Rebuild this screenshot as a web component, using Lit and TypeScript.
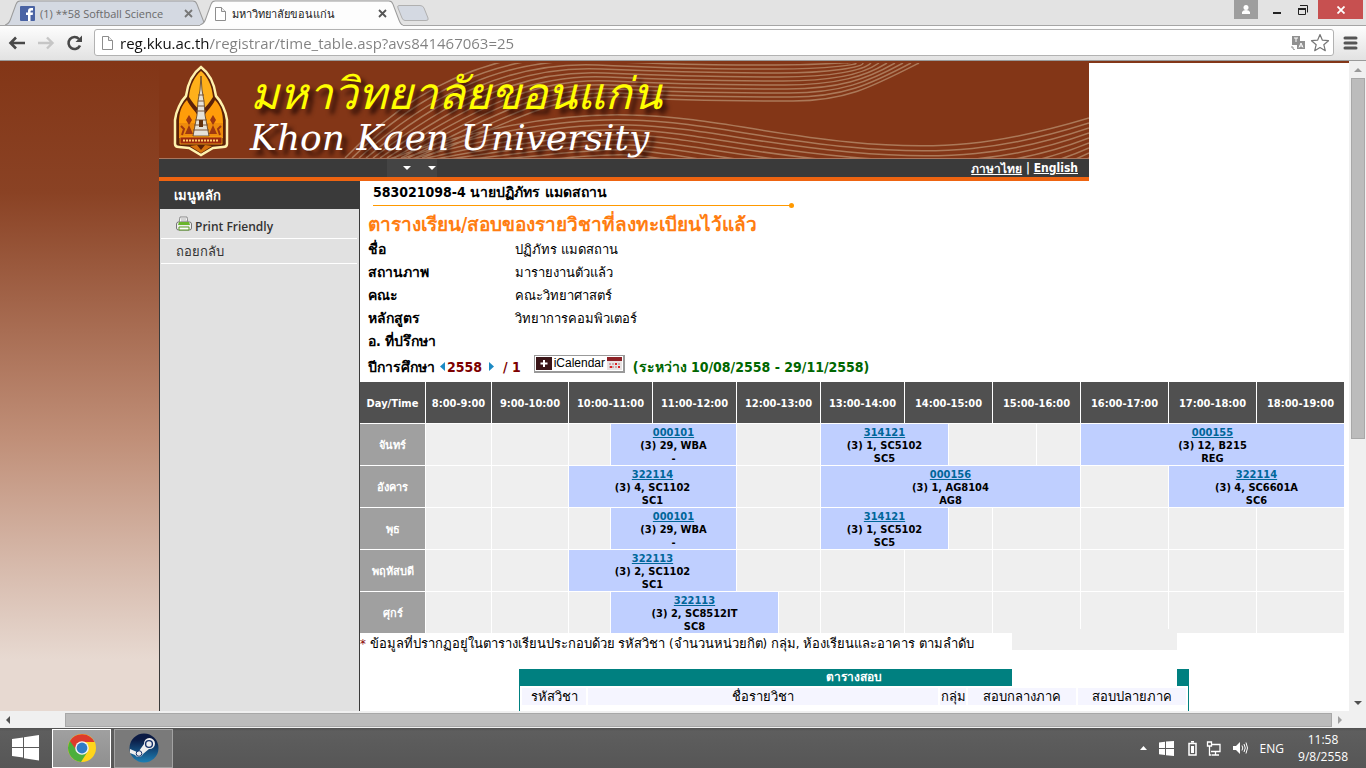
import { LitElement, html, svg, css } from "lit";
import { customElement } from "lit/decorators.js";

interface Slot {
  span: number;
  code?: string;
  detail?: string;
  room?: string;
}

const columnWidths = [66, 66, 77, 42, 42, 84, 42, 42, 84, 44, 44, 44, 44, 88, 88, 88];

const hours: [string, number][] = [
  ["8:00-9:00", 1],
  ["9:00-10:00", 1],
  ["10:00-11:00", 2],
  ["11:00-12:00", 1],
  ["12:00-13:00", 2],
  ["13:00-14:00", 1],
  ["14:00-15:00", 2],
  ["15:00-16:00", 2],
  ["16:00-17:00", 1],
  ["17:00-18:00", 1],
  ["18:00-19:00", 1],
];

const free = (span = 1): Slot => ({ span });
const busy = (span: number, code: string, detail: string, room: string): Slot => ({ span, code, detail, room });

const week: { day: string; slots: Slot[] }[] = [
  {
    day: "จันทร์",
    slots: [free(), free(), free(), busy(2, "000101", "(3) 29, WBA", "-"), free(2), busy(2, "314121", "(3) 1, SC5102", "SC5"), free(2), free(), busy(3, "000155", "(3) 12, B215", "REG")],
  },
  {
    day: "อังคาร",
    slots: [free(), free(), busy(3, "322114", "(3) 4, SC1102", "SC1"), free(2), busy(5, "000156", "(3) 1, AG8104", "AG8"), free(), busy(2, "322114", "(3) 4, SC6601A", "SC6")],
  },
  {
    day: "พุธ",
    slots: [free(), free(), free(), busy(2, "000101", "(3) 29, WBA", "-"), free(2), busy(2, "314121", "(3) 1, SC5102", "SC5"), free(), free(2), free(), free(), free()],
  },
  {
    day: "พฤหัสบดี",
    slots: [free(), free(), busy(3, "322113", "(3) 2, SC1102", "SC1"), free(2), free(), free(2), free(2), free(), free(), free()],
  },
  {
    day: "ศุกร์",
    slots: [free(), free(), free(), busy(3, "322113", "(3) 2, SC8512IT", "SC8"), free(), free(), free(2), free(2), free(), free(), free()],
  },
];

const profile: [string, string][] = [
  ["ชื่อ", "ปฏิภัทร แมดสถาน"],
  ["สถานภาพ", "มารายงานตัวแล้ว"],
  ["คณะ", "คณะวิทยาศาสตร์"],
  ["หลักสูตร", "วิทยาการคอมพิวเตอร์"],
  ["อ. ที่ปรึกษา", ""],
];

const pageIcon = svg`<path d="M1.500 .5h6l4 4v9h-10z" fill="#fff" stroke="#8d8d8d"/><path d="M7.500 .5v4h4" fill="#eee" stroke="#8d8d8d"/>`;

const lines = (n: number) => Array.from({ length: n }, (_, i) => i);

@customElement("app-root")
export class AppRoot extends LitElement {
  static styles = css`
    :host {
      display: flex;
      flex-direction: column;
      height: 100vh;
      overflow: hidden;
      background: #fff;
      color: #000;
      font-family: "DejaVu Sans Condensed", "DejaVu Sans", sans-serif;
      font-size: 13px;
    }
    * { box-sizing: border-box; }
    button { border: 0; padding: 0; margin: 0; background: none; font: inherit; color: inherit; display: block; }
    svg { display: block; flex: none; }
    .ui { font-family: "Open Sans", "Noto Sans", sans-serif; }

    .strip { display: flex; height: 25px; flex: none; background: #e3e3e3; padding-left: 5px; }
    .tab { position: relative; display: flex; align-items: center; width: 203px; height: 25px; padding: 1px 15px 0; font-size: 11px; color: #6a6a6a; margin-right: -8px; }
    .tab.active { z-index: 1; color: #222; padding: 1px 16px 0 14px; height: 26px; }
    .tab .shape { position: absolute; inset: 0; width: 100%; height: 100%; }
    .tab .icon, .tab .label, .tab .x { position: relative; }
    .tab .label { flex: 1; margin-left: 5px; white-space: nowrap; text-align: left; }
    .newtab { margin: 5px 0 0 1px; height: 17px; }
    .winctl { display: flex; margin-left: auto; height: 19px; padding-right: 3px; }
    .winctl button { display: grid; place-items: center; }
    .user { width: 24px; background: #9e9e9e; }
    .min, .restore { width: 26px; }
    .min { margin-left: 6px; }
    .close { width: 45px; height: 19px; background: #c75050; margin-left: 2px; }

    .toolbar { display: flex; align-items: center; flex: none; height: 36px; padding: 0 8px 1px; background: linear-gradient(#fdfdfd, #e2e2e2); border-top: 1px solid #a5a5a5; border-bottom: 1px solid #9a9a9a; }
    .toolbar .nav { width: 29px; }
    .omni { display: flex; flex: 1; align-items: center; height: 27px; border: 1px solid #b2b2b2; border-radius: 3px; background: #fff; padding: 0 3px 0 6px; margin-left: -1px; }
    .url { flex: 1; min-width: 0; height: 24px; border: 0; outline: 0; padding: 0; margin-left: 6px; font-size: 15px; -webkit-text-fill-color: transparent; background: linear-gradient(90deg, #111 89px, #808080 89px); -webkit-background-clip: text; background-clip: text; }
    .omni button { margin-left: 5px; }
    .menu { margin-left: 9px; }

    .view { display: flex; flex: 1; min-height: 0; }
    .page { position: relative; display: flex; flex: 1; min-width: 0; overflow: hidden; border-top: 2px solid #833617; }
    .gutter { width: 159px; flex: none; background: linear-gradient(#833617, #8a4224 20%, #c08f78 58%, #e7d9d1 92%); }
    .site { flex: 1; min-width: 0; display: flex; flex-direction: column; }
    .top { max-width: 930px; flex: none; }
    .banner { position: relative; height: 96px; background: #833617; border-bottom: 1px solid #a8765f; overflow: hidden; }
    .banner .art { position: absolute; left: 0; top: 0; }
    .names { position: relative; padding-left: 91px; color: #fff; text-shadow: 5px 5px 4px rgba(20, 0, 0, .7); white-space: nowrap; font-style: italic; }
    .thai { color: #ff0; font-size: 44px; line-height: 62px; height: 58px; margin: 0; font-weight: 400; }
    .eng { font-family: "DejaVu Serif", serif; font-size: 36px; line-height: 34px; margin: 0; }
    .langs { display: flex; align-items: center; height: 22px; background: #3a3a3a; border-bottom: 4px solid #ee6411; color: #fff; font-weight: 700; font-size: 12px; padding-right: 11px; }
    .langs a { color: #fff; }
    .langs .drop { display: flex; gap: 17px; margin-left: 228px; width: 50px; height: 18px; background: #444; padding: 7px 0 0 16px; margin-right: auto; }
    .cols { display: flex; flex: 1; min-height: 0; }
    .side { width: 201px; flex: none; background: #e1e1e1; border: solid #3a3a3a; border-width: 0 1px; }
    .side h2 { margin: 0; height: 28px; line-height: 30px; background: #3a3a3a; color: #fff; font-size: 13px; padding-left: 14px; }
    .side a { display: flex; align-items: center; gap: 3px; height: 25px; margin: 0 2px 0 1px; padding: 0 15px; border-bottom: 1px solid #fff; color: #333; text-decoration: none; font-size: 13px; }
    .side a.print { font-weight: 600; height: 30px; font-family: "Open Sans", sans-serif; font-size: 12px; padding-top: 5px; }
    .side a.print svg { margin-top: -5px; }

    .main { flex: 1; min-width: 0; padding-right: 4px; font-size: 14px; }
    .who { display: block; height: 24px; line-height: 22px; padding-left: 13px; font-weight: 700; }
    .rule { height: 1px; width: 418px; margin-left: 13px; background: #f90; position: relative; }
    .rule::after { content: ""; position: absolute; right: -3px; top: -2px; width: 5px; height: 5px; border-radius: 50%; background: #f90; }
    h1 { margin: 0; height: 32px; line-height: 36px; padding-left: 8px; font-size: 19px; color: #ff7d11; }
    dl { display: grid; grid-template-columns: 147px 1fr; grid-auto-rows: 23px; line-height: 23px; margin: 0; padding-left: 8px; }
    dt { font-weight: 700; }
    dd { margin: 0; font-size: 13px; }
    .term { display: flex; align-items: center; height: 29px; padding: 0 0 2px 8px; font-weight: 700; color: #7d0000; font-size: 14px; }
    .term .lbl { color: #000; margin-right: 3px; }
    .term .range { color: #060; margin-left: 8px; }
    .term button { margin: 0 2px; }
    .term .sem { margin: 0 13px 0 6px; }
    .term .ical { display: flex; align-items: center; width: 91px; height: 18px; margin: -6px 0 0; border: 1px solid #999; border-right: 2px solid #999; border-bottom: 2px solid #999; background: #fff; padding: 0 1px; color: #000; font: 12px "Liberation Sans", sans-serif; justify-content: space-between; }

    .week { border-collapse: separate; border-spacing: 0; table-layout: fixed; width: 100%; font-size: 11px; font-weight: 700; line-height: 13px; text-align: center; }
    .week th, .week td { height: 42px; padding: 1px 0 0; border: solid #fff; border-width: 0 1px 1px 0; background: #efefef; }
    .week thead th { background: #505050; color: #fff; }
    .week tbody th { background: #a0a0a0; color: #fff; }
    .week .busy { background: #bfcfff; }
    .week a { color: #069; display: block; }
    .note { margin: 0; height: 35px; line-height: 20px; font-size: 13px; white-space: nowrap; }
    .note span { color: #800; }
    .exam { width: 670px; border-collapse: separate; border-spacing: 2px; background: #fff; border: 1px solid teal; border-top: 0; font-size: 13px; line-height: 17px; margin-left: 159px; }
    .exam caption { background: teal; color: #fff; font-size: 12px; font-weight: 700; height: 17px; }
    .exam th { font-weight: 400; padding: 0; height: 17px; background: #f5f5ff; }
    .exam td { padding: 0; height: 20px; }
    .ghost { position: absolute; left: 1012px; top: 566px; width: 165px; height: 59px; background: #fff; border-top: 21px solid #efefef; }

    .vbar { display: flex; flex-direction: column; width: 17px; flex: none; background: #f0f0f0; align-items: center; justify-content: space-between; padding: 7px 0 6px; }
    .vthumb { width: 14px; height: 361px; margin: 6px 0 auto; background: #bcbcbc; border: 1px solid #a8a8a8; }
    .hbar { display: flex; align-items: center; height: 17px; flex: none; background: #f0f0f0; padding: 0 23px 0 6px; }
    .hthumb { flex: 1; height: 14px; margin: 0 6px 0 54px; background: #bcbcbc; border: 1px solid #a8a8a8; }

    .task { display: flex; align-items: center; height: 40px; flex: none; background: linear-gradient(#515151, #5e5e5e 8%, #565656); color: #fff; padding: 0 18px 0 12px; font-size: 12px; }
    .task .app { display: grid; place-items: center; width: 59px; height: 39px; border: 1px solid #a2a2a2; background: #7a7a7a; margin-right: 3px; }
    .task .app.on { background: linear-gradient(#a0a0a0, #8f8f8f); border-color: #fff; margin-left: 13px; }
    .tray { display: flex; align-items: center; margin-left: auto; gap: 12px; }
    .clock { text-align: center; line-height: 17px; margin-left: 2px; }
  `;

  private tabs() {
    return html`
      <header class="strip ui">
        <div class="tab">
          <svg class="shape" viewBox="0 0 201 25" preserveAspectRatio="none"><path d="M0 25C4 24 5 21 7 15L11 4Q12 1 15 1H186Q189 1 190 4L198 25" fill="#d4d9e2" stroke="#9b9b9b"/></svg>
          <svg class="icon" width="15" height="15"><rect width="15" height="15" rx="1" fill="#4a63a4"/><path d="M8 15V9H6V6.500H8V5Q8 2 11 2h2v2.500h-1.500Q10.500 4.500 10.500 5.500V6.500H13L12.700 9H10.500v6z" fill="#fff"/></svg>
          <span class="label">(1) **58 Softball Science</span>
          <button class="x" aria-label="Close tab"><svg width="9" height="9"><path d="M1 1l7 7M8 1L1 8" stroke="#777" stroke-width="1.800"/></svg></button>
        </div>
        <div class="tab active">
          <svg class="shape" viewBox="0 0 201 26" preserveAspectRatio="none"><path d="M0 25C4 24 5 21 7 15L11 4Q12 1 15 1H187Q190 1 191 4L197 20Q199 25 201 25V26H0z" fill="#fdfdfd"/><path d="M0 25C4 24 5 21 7 15L11 4Q12 1 15 1H187Q190 1 191 4L197 20Q199 25 201 25" fill="none" stroke="#9b9b9b"/></svg>
          <svg class="icon" width="13" height="14">${pageIcon}</svg>
          <span class="label">มหาวิทยาลัยขอนแก่น</span>
          <button class="x" aria-label="Close tab"><svg width="9" height="9"><path d="M1 1l7 7M8 1L1 8" stroke="#555" stroke-width="1.800"/></svg></button>
        </div>
        <button class="newtab" aria-label="New tab"><svg width="34" height="17"><path d="M3 .5H24Q27 .5 28 3L32 13Q33 15.500 30 15.500H9Q7 15.500 6 13L2 3Q1 .5 3 .5z" fill="#d4d9e2" stroke="#b0b0b0"/></svg></button>
        <div class="winctl">
          <button class="user" aria-label="User"><svg width="10" height="9"><circle cx="5" cy="2.500" r="2.500" fill="#fff"/><path d="M1 9V7q1-2 4-2t4 2v2z" fill="#fff"/></svg></button>
          <button class="min" aria-label="Minimize"><svg width="8" height="8"><path d="M0 6h8v2H0z" fill="#222"/></svg></button>
          <button class="restore" aria-label="Restore"><svg width="10" height="10"><path d="M2 .5h7.500v7" fill="none" stroke="#222"/><path d="M.5 3.500h7v6h-7z" fill="none" stroke="#222"/><path d="M0 3h8v2H0z" fill="#222"/></svg></button>
          <button class="close" aria-label="Close"><svg width="8" height="8"><path d="M.5 .5l7 7M7.500 .5l-7 7" stroke="#fff" stroke-width="1.800"/></svg></button>
        </div>
      </header>
      <div class="toolbar">
        <button class="nav" aria-label="Back"><svg width="18" height="16"><path d="M2 8H17M8 2.500L2.500 8L8 13.500" fill="none" stroke="#484848" stroke-width="2.600"/></svg></button>
        <button class="nav" aria-label="Forward"><svg width="18" height="16"><path d="M1 8H16M10 2.500L15.500 8L10 13.500" fill="none" stroke="#c6c6c6" stroke-width="2.400"/></svg></button>
        <button class="nav" aria-label="Reload"><svg width="17" height="16"><path d="M14 10.500A6 6 0 1 1 13 4" fill="none" stroke="#484848" stroke-width="2.600"/><path d="M16 .5V7H9.500z" fill="#484848"/></svg></button>
        <div class="omni">
          <svg width="13" height="14">${pageIcon}</svg>
          <input class="url ui" aria-label="Address" value="reg.kku.ac.th/registrar/time_table.asp?avs841467063=25" />
          <button aria-label="Translate"><svg width="14" height="14"><path d="M1 0h8v5H6v4H1z" fill="#909090"/><path d="M3 2h4M5 2v4" stroke="#fff"/><path d="M6 5h8v8H6z" fill="#909090"/><path d="M8 11.500L10 7l2 4.500M8.800 10h2.500" fill="none" stroke="#fff"/><path d="M1 10v2h2M2 13l2 1" fill="none" stroke="#909090"/></svg></button>
          <button aria-label="Bookmark"><svg width="20" height="19"><path d="M10 1.500l2.400 5.700 6.100.5-4.700 4 1.500 6L10 14.500l-5.300 3.200 1.500-6-4.700-4 6.100-.5z" fill="#fff" stroke="#777" stroke-width="1.200" stroke-linejoin="round"/></svg></button>
        </div>
        <button class="menu" aria-label="Menu"><svg width="15" height="14"><path d="M2 2h11M2 7h11M2 12h11" stroke="#555" stroke-width="3" stroke-linecap="round"/></svg></button>
      </div>`;
  }

  private banner() {
    return html`
      <div class="banner">
        <svg class="art" width="930" height="95" viewBox="0 0 930 95">
          <g fill="none" stroke="#b58a6a" stroke-width="1.500" opacity=".8">
            ${lines(12).map((i) => svg`<path d="M${186 + i * 7} 95C${250 + i * 9} ${28 + i * 3} ${330 + i * 6} ${-14 + i * 4} ${430 + i * 3} ${-10 + i * 4}S${560 + i * 2} ${-6 + i * 4} ${612 + i * 2} ${-6 + i * 4}S${700 + i} ${-8 + i * 3} ${672 + i * 8} 0"/>`)}
            ${lines(13).map((i) => svg`<path d="M${225 + i * 10} 98C${300 + i * 8} ${70 + i * 4} ${390 + i * 5} ${50 + i * 5} ${470} ${52 + i * 5}S${600 - i * 4} ${70 + i * 5} 690 ${79 + i * 5}S${840 + i * 5} ${82 + i * 5} 930 ${55 + i * 5}"/>`)}
          </g>
          <g>
            <path d="M42 4C50 10 55 18 57 33C62 38 67 48 68 57V81Q68 84 64 84L54 85L42 92L30 85L20 84Q16 84 16 81V57C17 48 22 38 27 33C29 18 34 10 42 4z" fill="#5b2108" stroke="#fff2ae" stroke-width="2.500"/>
            <path d="M42 8C48 13 53 22 54 34C48 44 44 45 42 50C40 45 36 44 30 34C31 22 36 13 42 8z" fill="#ffb01a"/>
            <path d="M28 37C22 43 20 50 20 60H39V53C36 47 31 44 28 37zM56 37C62 43 64 50 64 60H45V53C48 47 53 44 56 37z" fill="#ff9d0a"/>
            <path d="M20 60h44v15H20z" fill="#ee8b0c"/>
            <path d="M42 13L43 27L45 38L46 52L50 73H34L38 52L39 38L41 27z" fill="#e6e2d8" stroke="#54381f" stroke-width=".8"/>
            <path d="M39 32h6M39 38h6M38 43h8M37 48h10M36 57h12M35 62h14M34 67h16" stroke="#7b5738" stroke-width="1.200"/>
            <path d="M40 57h4v7h-4z" fill="#62310d"/>
            <path d="M30 52l3 5-3 5-3-5zM54 52l3 5-3 5-3-5zM30 62l4 9h-8zM54 62l4 9h-8z" fill="#9e3810"/>
            <path d="M22 63l3 3-2 6M62 63l-3 3 2 6" fill="none" stroke="#9e3810" stroke-width="2"/>
            <path d="M21 74h42v7H21z" fill="#9c2a0d" stroke="#ffb01a" stroke-width=".8"/>
            <path d="M24 77.500h36" stroke="#ffce6b" stroke-width="2" stroke-dasharray="2 1"/>
            <path d="M31 83L42 90L53 83L46 82L42 87L38 82z" fill="#d7730e"/>
          </g>
        </svg>
        <div class="names"><p class="thai">มหาวิทยาลัยขอนแก่น</p><p class="eng">Khon Kaen University</p></div>
      </div>
      <nav class="langs">
        <span class="drop"><svg width="8" height="4"><path d="M0 0h8L4 4z" fill="#fff"/></svg><svg width="8" height="4"><path d="M0 0h8L4 4z" fill="#fff"/></svg></span>
        <a href="#th">ภาษาไทย</a><span>&nbsp;|&nbsp;</span><a href="#en">English</a>
      </nav>`;
  }

  private timetable() {
    return html`
      <table class="week">
        <colgroup>${columnWidths.map((w) => html`<col width=${w} />`)}</colgroup>
        <thead><tr><th>Day/Time</th>${hours.map(([h, n]) => html`<th colspan=${n}>${h}</th>`)}</tr></thead>
        <tbody>
          ${week.map((row) => html`<tr><th>${row.day}</th>${row.slots.map((s) => s.code
            ? html`<td class="busy" colspan=${s.span}><a href="#${s.code}">${s.code}</a>${s.detail}<br />${s.room}</td>`
            : html`<td colspan=${s.span}></td>`)}</tr>`)}
        </tbody>
      </table>`;
  }

  render() {
    return html`
      ${this.tabs()}
      <div class="view">
        <div class="page">
          <div class="gutter"></div>
          <div class="site">
            <div class="top">${this.banner()}</div>
            <div class="cols">
              <aside class="side">
                <h2>เมนูหลัก</h2>
                <a class="print" href="#print"><svg width="16" height="16"><path d="M4 1h7l1 6H3z" fill="#fff" stroke="#888"/><path d="M5 3h5M5 5h6" stroke="#aaa"/><rect x=".5" y="6" width="15" height="8" rx="2" fill="#eee" stroke="#777"/><path d="M3 6h10l1 3H2z" fill="#6ab52c"/><path d="M3 11h10v3H3z" fill="#fff" stroke="#5a9a25"/></svg>Print Friendly</a>
                <a href="#back">ถอยกลับ</a>
              </aside>
              <main class="main">
                <span class="who">583021098-4 นายปฏิภัทร แมดสถาน</span>
                <div class="rule"></div>
                <h1>ตารางเรียน/สอบของรายวิชาที่ลงทะเบียนไว้แล้ว</h1>
                <dl>${profile.map(([k, v]) => html`<dt>${k}</dt><dd>${v}</dd>`)}</dl>
                <div class="term">
                  <span class="lbl">ปีการศึกษา</span>
                  <button aria-label="Previous year"><svg width="5" height="9"><path d="M5 0v9L0 4.500z" fill="#1c8ac4"/></svg></button>2558
                  <button aria-label="Next year"><svg width="11" height="9"><path d="M5 0v9l5-4.500z" fill="#1c8ac4"/></svg></button><span class="sem">/ 1</span>
                  <button class="ical"><svg width="16" height="13"><path d="M0 0h16v13H0z" fill="#3a1518"/><path d="M8 3v7M4.500 6.500h7" stroke="#fff" stroke-width="2"/></svg><span>iCalendar</span><svg width="15" height="13"><path d="M0 0h15v13H0z" fill="#e9e3e3"/><path d="M0 0h15v4H0z" fill="#8d2126"/><path d="M2 7h11M2 10h11" stroke="#a77" stroke-dasharray="2 1"/><path d="M3 9h2v2H3zM8 6h2v2H8zM11 9h2v2h-2z" fill="#d22"/></svg></button>
                  <span class="range">(ระหว่าง 10/08/2558 - 29/11/2558)</span>
                </div>
                ${this.timetable()}
                <p class="note"><span>*</span> ข้อมูลที่ปรากฏอยู่ในตารางเรียนประกอบด้วย รหัสวิชา (จำนวนหน่วยกิต) กลุ่ม, ห้องเรียนและอาคาร ตามลำดับ</p>
                <table class="exam">
                  <caption>ตารางสอบ</caption>
                  <colgroup><col width="64" /><col width="350" /><col width="26" /><col width="108" /><col width="108" /></colgroup>
                  <tr><th>รหัสวิชา</th><th>ชื่อรายวิชา</th><th>กลุ่ม</th><th>สอบกลางภาค</th><th>สอบปลายภาค</th></tr>
                  <tr><td></td><td></td><td></td><td></td><td></td></tr>
                </table>
              </main>
            </div>
          </div>
          <div class="ghost"></div>
        </div>
        <div class="vbar"><svg width="8" height="4"><path d="M0 4h8L4 0z" fill="#999"/></svg><div class="vthumb"></div><svg width="8" height="4"><path d="M0 0h8L4 4z" fill="#505050"/></svg></div>
      </div>
      <div class="hbar"><svg width="5" height="8"><path d="M4 0v8L0 4z" fill="#505050"/></svg><div class="hthumb"></div><svg width="5" height="8"><path d="M0 0v8l4-4z" fill="#a0a0a0"/></svg></div>
      <footer class="task ui">
        <button aria-label="Start"><svg width="27" height="26"><path d="M0 4l11-1.600V12H0zM12 2.200L27 0v12H12zM0 13h11v9.600L0 21zM12 13h15v12.500l-15-2.200z" fill="#fff"/></svg></button>
        <button class="app on" aria-label="Chrome"><svg width="30" height="30" viewBox="0 0 30 30"><circle cx="15" cy="15" r="14" fill="#ffd51c"/><path d="M15 15L2.900 8A14 14 0 0 0 14 29L21 18z" fill="#4caf3c"/><path d="M2.900 8A14 14 0 0 1 27.500 9H15L10 18z" fill="#dd3b2b"/><circle cx="15" cy="15" r="6.800" fill="#f3f3f3"/><circle cx="15" cy="15" r="5.400" fill="#2f7cc6"/></svg></button>
        <button class="app" aria-label="Steam"><svg width="30" height="30" viewBox="0 0 30 30"><defs><linearGradient id="st" x2="0" y2="1"><stop offset=".2" stop-color="#0b1a44"/><stop offset="1" stop-color="#1d7fb5"/></linearGradient></defs><circle cx="15" cy="15" r="14.500" fill="url(#st)"/><path d="M1 16l7 3 2-1 5-7a5.500 5.500 0 1 1 5 5l-6 5a4.500 4.500 0 0 1-8 1l-5-2z" fill="#eee"/><circle cx="20" cy="11" r="3.400" fill="#eee" stroke="#14306a" stroke-width="1.400"/><circle cx="10" cy="20.500" r="2.800" fill="none" stroke="#14306a"/></svg></button>
        <div class="tray">
          <svg width="7" height="4"><path d="M0 4h7L3.500 0z" fill="#fff"/></svg>
          <svg width="15" height="15"><path d="M0 1.500l6-.8V7H0zM7 .6L15 0v7H7zM0 8h6v6l-6-.8zM7 8h8v7l-8-.8z" fill="#fff"/></svg>
          <svg width="35" height="15" viewBox="0 0 35 15"><path d="M3 2.500h7v11.500H3zM5 .8h3" fill="none" stroke="#fff" stroke-width="1.500"/><path d="M5 5h3v7H5z" fill="#fff"/><path d="M25.500 3.500H34v7H25M29.500 11v3M26 14h7M21.500 1h4v4h-4zM23.500 5v9h2" fill="none" stroke="#fff" stroke-width="1.300"/></svg>
          <svg width="15" height="14"><path d="M0 5h3l4-4v12l-4-4H0z" fill="#fff"/><path d="M9 4.500q1.500 2.500 0 5M11 3q2.500 4 0 8M13 1.500q3 5.500 0 11" fill="none" stroke="#fff"/></svg>
          <span>ENG</span>
          <time class="clock">11:58<br />9/8/2558</time>
        </div>
      </footer>`;
  }
}
